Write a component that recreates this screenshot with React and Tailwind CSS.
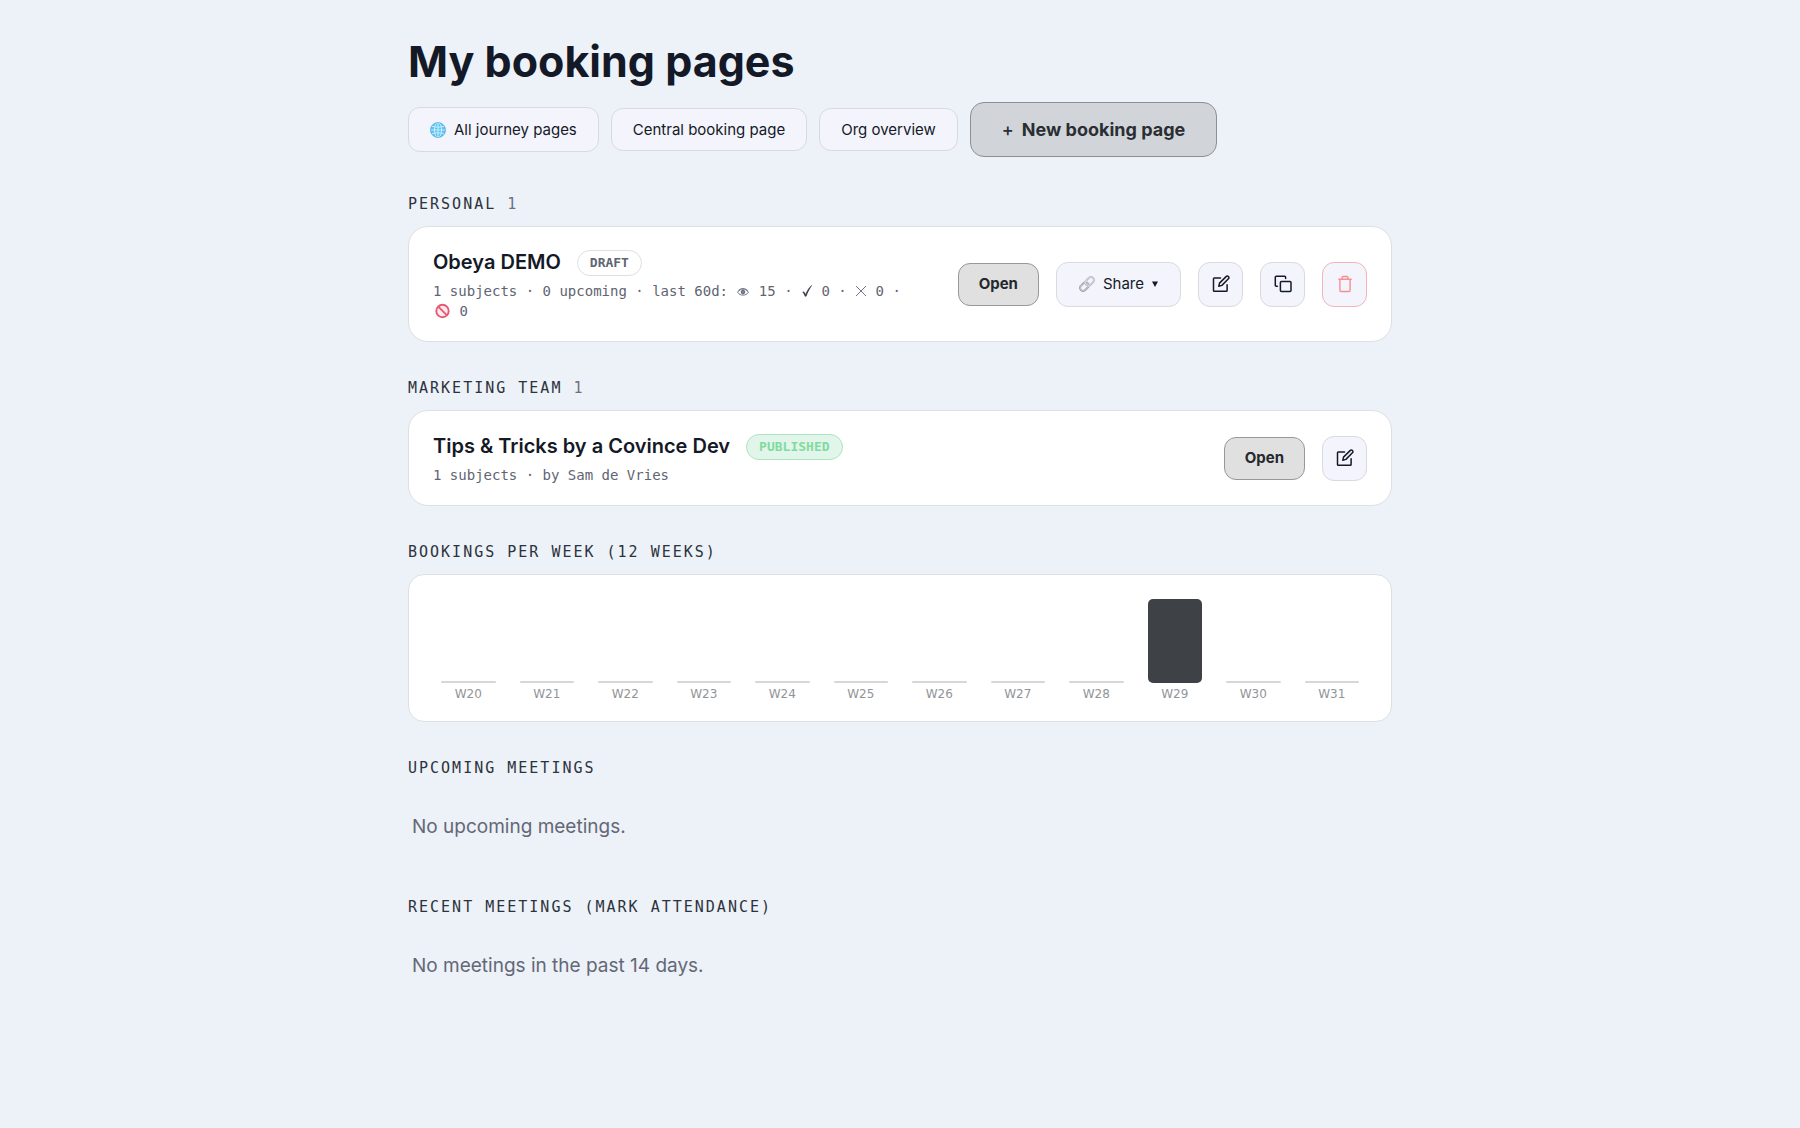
import React from 'react';

const weeks = [
  { label: 'W20', count: 0 },
  { label: 'W21', count: 0 },
  { label: 'W22', count: 0 },
  { label: 'W23', count: 0 },
  { label: 'W24', count: 0 },
  { label: 'W25', count: 0 },
  { label: 'W26', count: 0 },
  { label: 'W27', count: 0 },
  { label: 'W28', count: 0 },
  { label: 'W29', count: 1 },
  { label: 'W30', count: 0 },
  { label: 'W31', count: 0 },
];

const MAX_BAR = 84;

function GlobeIcon() {
  return (
    <svg className="size-4 shrink-0" viewBox="0 0 16 16" fill="none" aria-hidden="true">
      <circle cx="8" cy="8" r="7.6" fill="#5cc4f2" />
      <g stroke="#d8f1fc" strokeWidth="0.9">
        <ellipse cx="8" cy="8" rx="3.6" ry="7.4" />
        <path d="M8 .5v15M.5 8h15M1.8 4.2c3.6 1.3 8.8 1.3 12.4 0M1.8 11.8c3.6-1.3 8.8-1.3 12.4 0" />
      </g>
      <circle cx="8" cy="8" r="7.5" stroke="#49aee6" strokeWidth="0.7" />
    </svg>
  );
}

function LinkIcon() {
  return (
    <svg className="size-4 shrink-0" viewBox="0 0 16 16" fill="none" aria-hidden="true">
      <g transform="rotate(-45 8 8)" strokeLinecap="round">
        <rect x="-0.5" y="5" width="9.5" height="6" rx="3" stroke="#a3a0aa" strokeWidth="1.9" />
        <rect x="7" y="5" width="9.5" height="6" rx="3" stroke="#bcb9c2" strokeWidth="1.9" />
        <rect x="-0.5" y="5" width="9.5" height="6" rx="3" stroke="#e4e2ea" strokeWidth="0.5" />
        <rect x="7" y="5" width="9.5" height="6" rx="3" stroke="#eeecf3" strokeWidth="0.5" />
      </g>
    </svg>
  );
}

function EyeIcon() {
  return (
    <svg className="mx-px inline-block h-3 w-3 align-[-2px]" viewBox="0 0 12 12" fill="none" stroke="#5f6473" aria-hidden="true">
      <path d="M.6 6.3C2 4 4 3.1 6 3.1s4 .9 5.4 3.2C10 8.5 8 9.1 6 9.1S2 8.5.6 6.3Z" strokeWidth="0.9" />
      <circle cx="6" cy="6" r="1.8" fill="#7d818d" strokeWidth="1" />
      <path d="M1.2 4.6C3.6 1.9 8.4 1.9 10.8 4.6" strokeWidth="0.8" />
    </svg>
  );
}

function CheckIcon() {
  return (
    <svg className="inline-block h-3 w-3 align-[-1px]" viewBox="0 0 12 12" fill="#3f4553" aria-hidden="true">
      <path d="M1.3 7.2c.7-1 1.6-1 2.1-.2l1 1.9C6 5.5 8 2.5 10.6.3l.6.3C8.9 3.6 6.9 7.2 5.5 11.3l-1.5.5C3.3 9.8 2.5 8.2 1.3 7.2Z" />
    </svg>
  );
}

function CrossIcon() {
  return (
    <svg className="inline-block h-3 w-3 align-[-1px]" viewBox="0 0 12 12" fill="none" stroke="#5f6473" strokeWidth="0.9" aria-hidden="true">
      <path d="M1 1l10 10M11 1 1 11" />
    </svg>
  );
}

function BanIcon() {
  return (
    <svg className="inline-block size-[18px] align-[-4px]" viewBox="0 0 18 18" fill="none" stroke="#e65a72" strokeWidth="1.9" aria-hidden="true">
      <circle cx="9.5" cy="9" r="6.2" fill="#fdebef" />
      <path d="m5.300 4.700 8.500 8.500" />
    </svg>
  );
}

function EditIcon() {
  return (
    <svg className="size-[18px]" viewBox="0 0 18 18" fill="none" stroke="currentColor" strokeWidth="1.5" strokeLinejoin="round" aria-hidden="true">
      <path d="M8.5 2.9H2.3c-.5 0-.8.3-.8.8v11.8c0 .5.3.8.8.8h12c.5 0 .8-.3.8-.8V9.8" strokeLinecap="round" />
      <path d="M6.8 11.3l.7-3.2 6.6-6.5c.7-.7 1.7-.7 2.3-.1.7.7.7 1.6 0 2.3L9.9 10.4l-3.1.9Z" />
    </svg>
  );
}

function CopyIcon() {
  return (
    <svg className="size-[18px]" viewBox="0 0 18 18" fill="none" stroke="currentColor" strokeWidth="1.5" strokeLinejoin="round" strokeLinecap="round" aria-hidden="true">
      <rect x="6.4" y="6.6" width="10.6" height="10" rx="1" />
      <path d="M3.4 11.2H2.3c-.6 0-1-.4-1-1V2.3c0-.6.4-1 1-1h8.3c.6 0 1 .4 1 1v1.3" />
    </svg>
  );
}

function TrashIcon() {
  return (
    <svg className="size-[18px]" viewBox="0 0 18 18" fill="none" stroke="currentColor" strokeWidth="1.4" strokeLinejoin="round" aria-hidden="true">
      <path d="M2.8 4.3h12.4M6.1 4.2V2.4c0-.6.3-.9.9-.9h4c.6 0 .9.3.9.9v1.8" strokeLinecap="round" />
      <path d="M3.9 4.5v11.1c0 .6.3.9.9.9h8.4c.6 0 .9-.3.9-.9V4.5" />
    </svg>
  );
}

function SectionLabel({ children, count }) {
  return (
    <h2 className="font-['DejaVu_Sans_Mono',monospace] text-[15px] leading-5 tracking-[2px] text-[#2c333c] uppercase">
      {children}
      {count !== undefined && <span className="text-[#6b7280]"> {count}</span>}
    </h2>
  );
}

function OpenButton() {
  return (
    <button
      type="button"
      className="h-[43px] rounded-xl border border-[#96989a] bg-[#e0e0e0] px-5 text-[15px] leading-5 font-bold text-[#25292e]"
    >
      Open
    </button>
  );
}

function IconButton({ label, danger, children }) {
  return (
    <button
      type="button"
      aria-label={label}
      className={
        danger
          ? 'flex size-[45px] items-center justify-center rounded-xl border border-[#f6b3b6] bg-[#f3f4fc] text-[#f88f8f]'
          : 'flex size-[45px] items-center justify-center rounded-xl border border-[#d8dae0] bg-[#f3f4fc] text-[#151a2a]'
      }
    >
      {children}
    </button>
  );
}

function PageCard({ title, badge, meta, children }) {
  return (
    <article className="mt-3 flex items-center justify-between gap-[17px] rounded-[20px] border border-[#dddfe2] bg-white px-6 py-5">
      <div className="min-w-0">
        <div className="flex items-center gap-4">
          <h3 className="text-xl leading-[31px] font-semibold text-[#141927]">{title}</h3>
          {badge}
        </div>
        <p className="mt-[3px] max-w-[490px] font-['DejaVu_Sans_Mono',monospace] text-sm leading-5 text-[#5f6473]">
          {meta}
        </p>
      </div>
      <div className="flex shrink-0 items-center gap-[17px]">{children}</div>
    </article>
  );
}

function WeekChart() {
  return (
    <div className="mt-3 flex items-end gap-6 rounded-2xl border border-[#dddfe2] bg-white px-8 pt-6 pb-5">
      {weeks.map((week) => (
        <div key={week.label} className="flex flex-1 flex-col items-center">
          <div
            className={week.count ? 'w-full rounded-[5px] bg-[#3e4146]' : 'w-full rounded-[5px] bg-[#d6d7d8]'}
            style={{ height: week.count ? week.count * MAX_BAR : 2 }}
          />
          <span className="mt-1 font-['DejaVu_Sans',sans-serif] text-xs leading-[14px] text-[#929497]">
            {week.label}
          </span>
        </div>
      ))}
    </div>
  );
}

function App() {
  return (
    <div className="min-h-screen bg-[#edf1f8] font-['Inter',sans-serif] text-[#141927]">
      <main className="mx-auto max-w-[1032px] px-6 pt-8 pb-16">
        <h1 className="text-[43px] leading-[58px] font-bold">My booking pages</h1>

        <nav className="mt-3 flex flex-wrap items-center gap-3" aria-label="Booking pages">
          <a
            href="#journeys"
            className="flex h-[45px] items-center gap-2 rounded-xl border border-[#d8dae0] bg-[#f3f4fc] px-[21px] text-[15px] leading-5"
          >
            <GlobeIcon />
            All journey pages
          </a>
          <a
            href="#central"
            className="flex h-[43px] items-center rounded-xl border border-[#d8dae0] bg-[#f3f4fc] px-[21px] text-[15px] leading-5"
          >
            Central booking page
          </a>
          <a
            href="#org"
            className="flex h-[43px] items-center rounded-xl border border-[#d8dae0] bg-[#f3f4fc] px-[21px] text-[15px] leading-5"
          >
            Org overview
          </a>
          <button
            type="button"
            className="flex h-[55px] items-center gap-2 rounded-[14px] border border-[#8c8f94] bg-[#d1d5da] px-[31px] text-lg leading-6 font-bold text-[#2a2e33]"
          >
            <span className="font-medium">+</span>
            New booking page
          </button>
        </nav>

        <section className="mt-[37px]">
          <SectionLabel count={1}>Personal</SectionLabel>
          <PageCard
            title="Obeya DEMO"
            badge={
              <span className="rounded-full border border-[#dddfe4] px-3 font-['DejaVu_Sans_Mono',monospace] text-[13px] leading-6 font-bold text-[#5f6473]">
                DRAFT
              </span>
            }
            meta={
              <>
                1 subjects · 0 upcoming · last 60d: <EyeIcon /> 15 · <CheckIcon /> 0 · <CrossIcon /> 0 ·{' '}
                <span className="inline-block">
                  <BanIcon /> 0
                </span>
              </>
            }
          >
            <OpenButton />
            <button
              type="button"
              aria-haspopup="menu"
              className="flex h-[45px] items-center gap-2 rounded-xl border border-[#d8dae0] bg-[#f3f4fc] px-[22px] text-[15px] leading-5"
            >
              <LinkIcon />
              <span>Share</span>
              <svg className="size-[6px]" viewBox="0 0 6 6" fill="currentColor" aria-hidden="true">
                <path d="M0 .5h6L3 6Z" />
              </svg>
            </button>
            <IconButton label="Edit">
              <EditIcon />
            </IconButton>
            <IconButton label="Duplicate">
              <CopyIcon />
            </IconButton>
            <IconButton label="Delete" danger>
              <TrashIcon />
            </IconButton>
          </PageCard>
        </section>

        <section className="mt-9">
          <SectionLabel count={1}>Marketing team</SectionLabel>
          <PageCard
            title="Tips & Tricks by a Covince Dev"
            badge={
              <span className="rounded-full border border-[#a9e6c0] bg-[#e2f5ea] px-3 font-['DejaVu_Sans_Mono',monospace] text-[13px] leading-6 font-bold text-[#7fdc9f]">
                PUBLISHED
              </span>
            }
            meta="1 subjects · by Sam de Vries"
          >
            <OpenButton />
            <IconButton label="Edit">
              <EditIcon />
            </IconButton>
          </PageCard>
        </section>

        <section className="mt-9">
          <SectionLabel>Bookings per week (12 weeks)</SectionLabel>
          <WeekChart />
        </section>

        <section className="mt-9">
          <SectionLabel>Upcoming meetings</SectionLabel>
          <p className="mt-[23px] px-1 py-3 text-[19px] leading-7 text-[#636876]">No upcoming meetings.</p>
        </section>

        <section className="mt-11">
          <SectionLabel>Recent meetings (mark attendance)</SectionLabel>
          <p className="mt-[23px] px-1 py-3 text-[19px] leading-7 text-[#636876]">No meetings in the past 14 days.</p>
        </section>
      </main>
    </div>
  );
}

export default App;
